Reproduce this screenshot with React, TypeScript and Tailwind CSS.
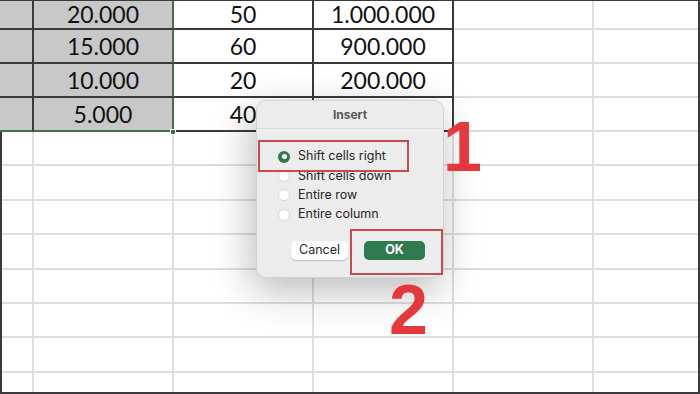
import React from "react";

// valores das linhas visíveis da planilha
const linhas = [
  ["20.000", "50", "1.000.000"],
  ["15.000", "60", "900.000"],
  ["10.000", "20", "200.000"],
  ["5.000", "40", ""],
];

const larguras = ["w-[34px]", "w-[140px]", "w-[140px]", "w-[140px]", "w-[140px]", "flex-1"];

function CelulaTopo({ col, row, texto }: { col: number; row: number; texto?: string }) {
  const selecionada = col < 2;
  let bordaR = "border-r-2 border-r-[#3a3a3a]";
  if (col === 1) bordaR = "border-r-2 border-r-[#3f6f4e]";
  if (col === 4) bordaR = "border-r-2 border-r-[#dedede]";
  if (col === 5) bordaR = "";
  let bordaB = "border-b-2 border-b-[#3a3a3a]";
  if (col >= 4) bordaB = "border-b-2 border-b-[#dedede]";
  if (row === 3 && col < 2) bordaB = "border-b-2 border-b-[#3f6f4e]";

  return (
    <div
      className={`${larguras[col]} ${bordaR} ${bordaB} ${
        selecionada ? "bg-[#c8c8c8]" : "bg-white"
      } flex h-full items-center justify-center text-[23px] text-[#111111]`}
    >
      {texto}
    </div>
  );
}

function Radio({ marcado, label }: { marcado?: boolean; label: string }) {
  return (
    <div className="flex h-[19.4px] items-center gap-[8px] pl-[21px]">
      {marcado ? (
        <span className="flex h-[12px] w-[12px] items-center justify-center rounded-full bg-[#2f7a4d]">
          <span className="h-[5px] w-[5px] rounded-full bg-white" />
        </span>
      ) : (
        <span className="h-[12px] w-[12px] rounded-full border border-[#d6d6d6] bg-white" />
      )}
      <span className="text-[12.5px] text-[#262626]">{label}</span>
    </div>
  );
}

export default function App() {
  return (
    <div className="relative h-[394px] w-[700px] overflow-hidden bg-white font-['Lato',sans-serif]">
      {/* linhas com dados */}
      {linhas.map((linha, i) => (
        <div key={i} className={`flex ${i === 0 ? "h-[30px]" : "h-[34px]"}`}>
          {[0, 1, 2, 3, 4, 5].map((c) => (
            <CelulaTopo
              key={c}
              col={c}
              row={i}
              texto={c >= 1 && c <= 3 ? linha[c - 1] : undefined}
            />
          ))}
        </div>
      ))}

      {/* linhas vazias */}
      <div className="border-l-2 border-l-[#3a3a3a]">
        {Array.from({ length: 8 }).map((_, i) => (
          <div key={i} className="flex h-[34.4px]">
            {[0, 1, 2, 3, 4, 5].map((c) => (
              <div
                key={c}
                className={`${c === 0 ? "w-[32px]" : larguras[c]} ${
                  c < 5 ? "border-r-2 border-r-[#dedede]" : ""
                } border-b-2 border-b-[#dedede] h-full`}
              />
            ))}
          </div>
        ))}
      </div>

      {/* moldura */}
      <div className="pointer-events-none absolute inset-0 border-t border-r-2 border-b-2 border-[#3a3a3a]" />

      {/* alça da seleção */}
      <div className="absolute left-[170px] top-[129px] h-[6px] w-[6px] border border-white bg-[#3f6f4e]" />

      {/* diálogo Insert */}
      <div className="absolute left-[256px] top-[100px] flex h-[178px] w-[188px] flex-col rounded-[10px] border border-[#d2d2d2] bg-[#ececec] font-['Inter',sans-serif] shadow-[-4px_12px_40px_rgba(0,0,0,0.28)]">
        <div className="flex h-[28px] items-center justify-center border-b border-[#dadada] text-[12px] font-bold text-[#575757]">
          Insert
        </div>
        <div className="pt-[18px]">
          <Radio marcado label="Shift cells right" />
          <Radio label="Shift cells down" />
          <Radio label="Entire row" />
          <Radio label="Entire column" />
        </div>
        <div className="mt-[16px] flex gap-[16px] pl-[34px]">
          <div className="flex h-[19px] w-[57px] items-center justify-center rounded-[5px] bg-white text-[12.5px] text-[#262626] shadow-[0_1px_1px_rgba(0,0,0,0.2)]">
            Cancel
          </div>
          <div className="flex h-[19px] w-[61px] items-center justify-center rounded-[5px] bg-[#2f7a4d] text-[12.5px] font-bold text-white">
            OK
          </div>
        </div>
      </div>

      {/* marcações vermelhas */}
      <div className="absolute left-[258px] top-[140px] h-[32px] w-[151px] border-[2.5px] border-[#c94a4e]" />
      <div className="absolute left-[350px] top-[229px] h-[46px] w-[93px] border-[2.5px] border-[#c94a4e]" />
      <div className="absolute left-[443px] top-[112px] font-['Liberation_Sans',sans-serif] text-[70px] font-bold leading-none text-[#e5383d]">
        1
      </div>
      <div className="absolute left-[389px] top-[275px] font-['Liberation_Sans',sans-serif] text-[70px] font-bold leading-none text-[#e5383d]">
        2
      </div>
    </div>
  );
}
